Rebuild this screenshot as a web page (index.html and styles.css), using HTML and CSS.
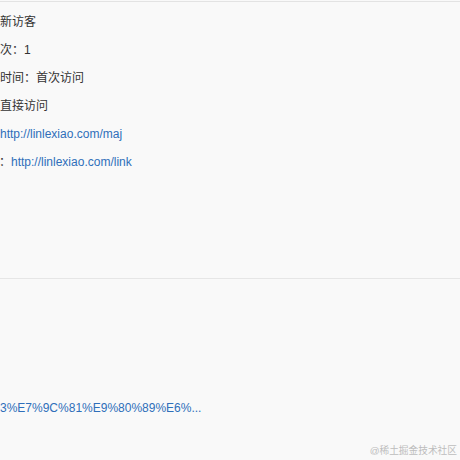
FILE: index.html
```html
<!DOCTYPE html>
<html lang="zh-CN">
<head>
<meta charset="utf-8">
<title>访客信息</title>
<link rel="stylesheet" href="styles.css">
</head>
<body>
<div class="page">
  <section class="panel info">
    <div class="row">新访客</div>
    <div class="row">次：1</div>
    <div class="row">时间：首次访问</div>
    <div class="row">直接访问</div>
    <div class="row"><a class="link">http://linlexiao.com/maj</a></div>
    <div class="row"><span class="colon">：</span><a class="link">http://linlexiao.com/link</a></div>
  </section>
  <section class="panel lower">
    <div class="row"><a class="link">3%E7%9C%81%E9%80%89%E6%...</a></div>
  </section>
</div>
<div class="watermark">@稀土掘金技术社区</div>
</body>
</html>
```
FILE: styles.css
```css
html, body {
  margin: 0;
  padding: 0;
  background: #f9f9f9;
  overflow: hidden;
}
body {
  width: 460px;
  height: 460px;
  position: relative;
  font-family: "Liberation Sans", Arial, "Noto Sans CJK SC", sans-serif;
  font-size: 12px;
  color: #333;
}
.page {
  padding-top: 1px;
}
.panel {
  border-top: 1px solid #e3e3e3;
}
.info {
  padding-top: 6px;
  height: 270px;
}
.lower {
  border-top-color: #e6e6e6;
  padding-top: 115px;
}
.row {
  line-height: 28px;
  height: 28px;
  white-space: nowrap;
}
.colon {
  display: inline-block;
  margin-left: -1px;
  width: 12px;
}
.link {
  color: #2f6fba;
  text-decoration: none;
}
.watermark {
  position: absolute;
  right: 3px;
  bottom: 2px;
  font-size: 9.7px;
  line-height: 14px;
  color: #bdbdbd;
}
```
